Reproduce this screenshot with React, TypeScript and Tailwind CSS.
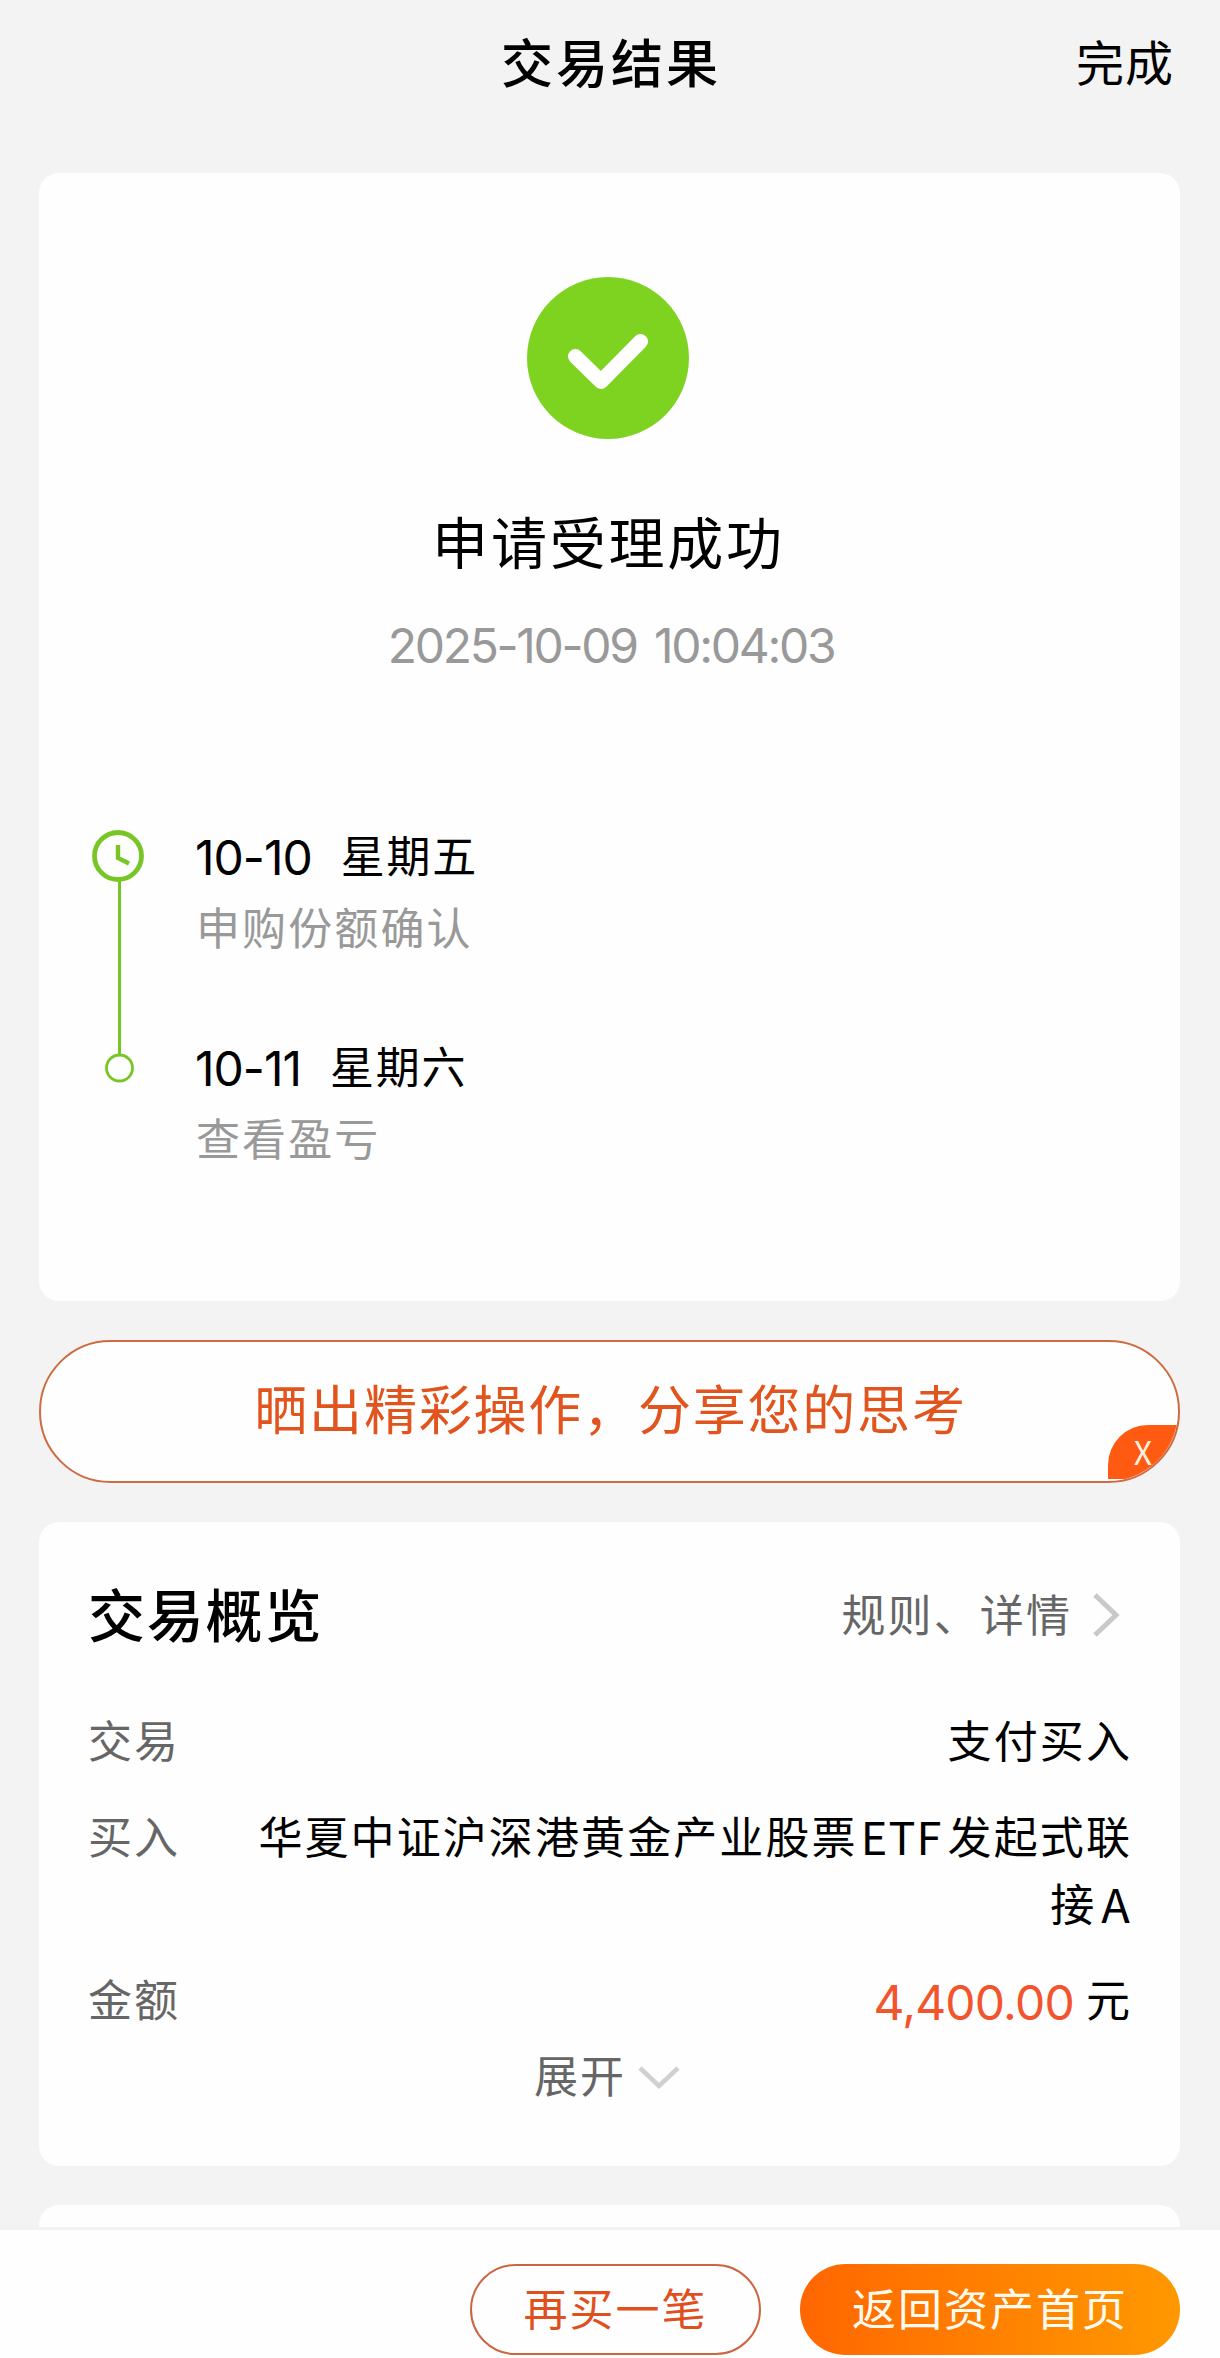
import React from "react"

type TimelineStep = {
  date: string;
  weekday: string;
  label: string;
}

const steps: TimelineStep[] = [
  { date: "10-10", weekday: "星期五", label: "申购份额确认" },
  { date: "10-11", weekday: "星期六", label: "查看盈亏" },
];

const SuccessIcon = () => (
  <svg className="mr-[4px]" width="162" height="162" viewBox="0 0 162 162" fill="none">
    <circle cx="81" cy="81" r="81" fill="#7ed320" />
    <path d="M48.5 79.5 L74 104.5 L113.5 64.5" stroke="#fff" strokeWidth="15" strokeLinecap="round" strokeLinejoin="round" />
  </svg>
);

const TimelineRail = () => (
  <svg width="54" height="256" viewBox="0 0 54 256" fill="none" stroke="#78c626">
    <circle cx="26" cy="27" r="23.5" strokeWidth="4.8" />
    <path d="M26 16 V29 L37 34.5" strokeWidth="4.4" />
    <path d="M27.5 52 V225" strokeWidth="3" />
    <circle cx="27.5" cy="239" r="13" strokeWidth="2.8" />
  </svg>
);

const Step: React.FC<{ step: TimelineStep }> = ({ step }) => (
  <div className="h-[211px]">
    <div className="flex h-[72px] items-center text-[44px] text-black">
      <span className="pt-[3px] font-[Inter] text-[48px] tracking-[-1px]">{step.date}</span>
      <span className="mb-[4px] ml-[29px] tracking-[1.8px]">{step.weekday}</span>
    </div>
    <p className="h-[72px] pl-[1px] text-[44px] leading-[69px] tracking-[2.1px] text-[#999]">{step.label}</p>
  </div>
);

const Row: React.FC<{ label: string; className: string; children: React.ReactNode }> = ({ label, className, children }) => (
  <div className={`flex justify-between text-[44px] leading-[67px] tracking-[2.1px] ${className}`}>
    <span className="shrink-0 text-[#666]">{label}</span>
    <div className="text-right text-black">{children}</div>
  </div>
);

export default function App() {
  return (
    <div className="flex h-[2358px] w-[1220px] flex-col overflow-hidden bg-[#f3f3f3] font-['Noto_Sans_CJK_SC',sans-serif]">
      <header className="grid h-[173px] shrink-0 grid-cols-[1fr_auto_1fr] items-start px-[46px] pt-[21px] text-black">
        <h1 className="col-start-2 pl-[2px] pt-px text-[52px] font-medium leading-[78px] tracking-[3px]">交易结果</h1>
        <button className="justify-self-end text-[48px] leading-[78px] tracking-[1px]">完成</button>
      </header>

      <main className="flex min-h-0 flex-1 flex-col pl-[39px] pr-[40px]">
        <section className="flex h-[1128px] shrink-0 flex-col items-center rounded-[20px] bg-[#fefefe] pt-[104px]">
          <SuccessIcon />
          <h2 className="mt-[59px] pr-[2px] text-[56px] leading-[84px] tracking-[2.8px] text-black">申请受理成功</h2>
          <p className="mt-[28px] pl-[3px] font-[Inter] text-[48px] leading-[72px] tracking-[-2.3px] text-[#999] [word-spacing:6px]">
            2025-10-09 10:04:03
          </p>
          <div className="mt-[138px] flex w-full pl-[53px]">
            <div className="pt-[9px]">
              <TimelineRail />
            </div>
            <div className="pl-[49px]">
              {steps.map((step) => (
                <Step key={step.date} step={step} />
              ))}
            </div>
          </div>
        </section>

        <button className="relative mt-[39px] flex h-[143px] shrink-0 items-center justify-center overflow-hidden rounded-full border-2 border-[#cd6c42] bg-[#fefefe] pb-[7px] pl-[2px] text-[53px] tracking-[1.8px] text-[#e2541d]">
          晒出精彩操作，分享您的思考
          <span className="absolute bottom-[2px] right-0 flex h-[54px] w-[70px] items-center justify-center rounded-tl-[40px] bg-[#ff5a12] pb-[2px] text-[32px] tracking-normal text-[#fff3e0]">
            X
          </span>
        </button>

        <section className="mt-[39px] h-[644px] shrink-0 rounded-[20px] bg-[#fefefe] pl-[49px] pr-[48px] pt-[48px]">
          <div className="flex h-[84px] items-center justify-between">
            <h2 className="text-[57px] font-medium leading-[84px] tracking-[1.8px] text-black">交易概览</h2>
            <a className="flex items-center pr-[12px] text-[44px] tracking-[2.1px] text-[#666]">
              <span className="pt-px">规则、详情</span>
              <svg className="ml-[20px] mt-[5px]" width="28" height="44" viewBox="0 0 28 44" fill="none" stroke="#c9c9c9" strokeWidth="5">
                <path d="M3 2 L24 22 L3 42" />
              </svg>
            </a>
          </div>
          <Row label="交易" className="mt-[52px]">支付买入</Row>
          <Row label="买入" className="mt-[29px]">
            <div className="flex justify-end">
              华夏中证沪深港黄金产业股票<span className="ml-[3px] mr-[5px] text-[45px] tracking-[1.2px]">ETF</span>发起式联
            </div>
            <div className="flex justify-end">
              接<span className="ml-[5px] text-[47px]">A</span>
            </div>
          </Row>
          <Row label="金额" className="mt-[29px]">
            <div className="flex h-[67px] justify-end">
              <span className="pt-[4px] font-[Inter] text-[48px] tracking-[-0.8px] text-[#f2542d]">4,400.00</span>
              <span className="ml-[12px]">元</span>
            </div>
          </Row>
          <button className="mx-auto mt-[9px] flex items-center pr-[6px] text-[44px] leading-[67px] tracking-[2px] text-[#666]">
            展开
            <svg className="ml-[12px] mt-[6px]" width="42" height="26" viewBox="0 0 42 26" fill="none" stroke="#d0d0d0" strokeWidth="4.5">
              <path d="M2 3 L21 21 L40 3" />
            </svg>
          </button>
        </section>

        <section className="mt-[39px] h-[60px] shrink-0 rounded-t-[20px] bg-[#fefefe]" />
      </main>

      <footer className="z-10 flex h-[131px] shrink-0 items-start justify-end gap-[39px] border-t-[3px] border-[#f2f2f2] bg-[#fefefe] pr-[40px] pt-[34px] text-[44px] tracking-[2px]">
        <button className="h-[91px] w-[291px] rounded-full border-2 border-[#cd6540] pb-[6px] text-[#e0501f]">再买一笔</button>
        <button className="h-[91px] w-[380px] rounded-full bg-linear-to-r from-[#ff6600] to-[#ff9800] pb-[6px] text-[#fffaf0]">返回资产首页</button>
      </footer>
    </div>
  );
}
